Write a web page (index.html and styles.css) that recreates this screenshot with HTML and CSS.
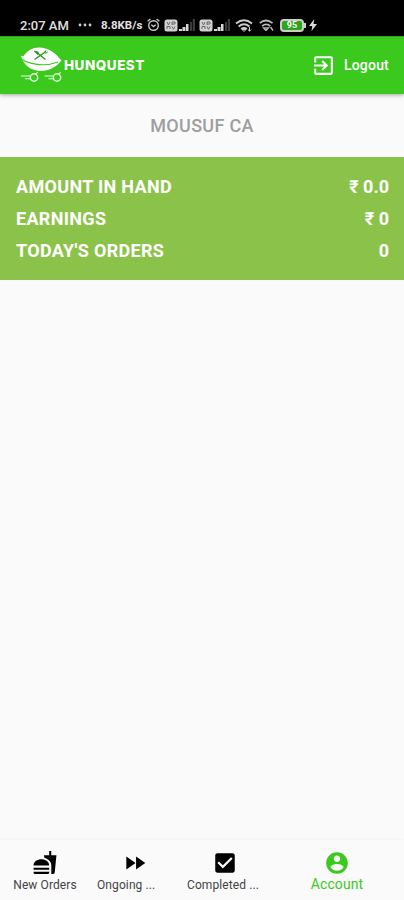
FILE: index.html
```
<!DOCTYPE html>
<html lang="en">

<head>
    <meta charset="utf-8">
    <meta name="viewport" content="width=device-width, initial-scale=1">
    <title>Hunquest</title>
    <link rel="stylesheet" href="styles.css">
</head>

<body>

    <svg width="0" height="0" class="defs">
        <symbol id="sim" viewBox="0 0 14 13">
            <rect x="0.5" y="0.5" width="13" height="12" rx="2.5" fill="#d2d2d2"/>
            <path d="M3 3l1.5 3L6 3M8 6V3h3v2H8M3 10V7.5h3V10M8 7.5l1.5 2.8L11 7.5" fill="none" stroke="#666" stroke-width="1"/>
        </symbol>
        <symbol id="signal" viewBox="0 0 16 12">
            <path d="M0 12v-2h3v2zM3.5 12V8h3v4zM7 12V5h2.5v7z" fill="#d8d8d8"/>
            <path d="M11 12V3h2v9zM13.7 12V0H16v12z" fill="#3c3c3c"/>
        </symbol>
    </svg>

    <div class="status">
        <span class="time">2:07 AM</span>
        <svg class="dots" width="14" height="4" viewBox="0 0 14 4" fill="#ccc"><circle cx="2" cy="2" r="1.4"/><circle cx="7" cy="2" r="1.4"/><circle cx="12" cy="2" r="1.4"/></svg>
        <span class="speed">8.8KB/s</span>
        <svg class="alarm" width="13" height="14" viewBox="0 0 13 14" fill="none" stroke="#c8c8c8" stroke-width="1.4"><circle cx="6.5" cy="7.5" r="4.8"/><path d="M.6 3.2L3.4 1M12.4 3.2L9.6 1M4.3 6.7l2.2 1.8 2.2-1.8"/></svg>
        <svg class="sim" width="14" height="13"><use href="#sim"/></svg>
        <svg class="signal" width="16" height="12"><use href="#signal"/></svg>
        <svg class="sim" width="14" height="13"><use href="#sim"/></svg>
        <svg class="signal" width="16" height="12"><use href="#signal"/></svg>
        <svg class="wifi" width="18" height="13" viewBox="0 0 18 13" fill="none" stroke="#ccc" stroke-width="1.9"><path d="M1 4.5q8-6.5 16 0M3.6 7.4q5.4-4.4 10.8 0M6.2 10q2.8-2.2 5.6 0"/><path d="M9 12.5l-2-2h4zM14.5 8v4M12.8 10.5l1.7 1.7 1.7-1.7" stroke-width="1"/></svg>
        <svg class="wifi2" width="15" height="12" viewBox="0 0 15 12" fill="none" stroke="#bbb" stroke-width="1.7"><path d="M.7 4.2q6.3-5.4 12.8 0M3.2 7q4-3.4 8 0" /><path d="M7 11.5L4.5 8.8h5zM11.5 8l2.5 3.5" stroke-width="1.3"/></svg>
        <div class="battery"><span>95</span></div>
        <i class="tip"></i>
        <svg class="bolt" width="8" height="12" viewBox="0 0 8 12" fill="#ddd"><path d="M5.3 0L0 7h3.3L2.5 12 8 5H4.5z"/></svg>
    </div>

    <header class="header">
        <div class="brand">
            <svg width="43" height="38" viewBox="0 0 43 38">
                <path d="M0 8.8l2.2.8C6 3.5 12 .5 18 .5c9 0 16 5 22.5 13C35 20 28 24 20 24 12 24 5 20 1.5 13z" fill="#fff"/>
                <path d="M1.2 12.6C10 18.5 26 19.3 37 15" fill="none" stroke="#3bc91e" stroke-width="1.2"/>
                <path d="M15 5l9.5 7.5M13.5 12.5L25 4.5" stroke="#249b18" stroke-width="1.4"/>
                <path d="M13.3 4.2l4 .8-.5 2.4zM23.2 5.8l2-2.7M24.3 6.7l2.6-2" fill="#249b18" stroke="#249b18" stroke-width=".9"/>
                <g fill="none" stroke="#e4ffe0" stroke-width="1.4">
                    <circle cx="13" cy="30.5" r="3.7"/>
                    <circle cx="36" cy="30.5" r="3.7"/>
                    <path d="M0 29h9.3M4 31.8h5.6M23.5 29h9M27.5 31.8h5.3M14.5 27.2l2.2-1.8M37.5 27.2l2.2-1.8" stroke-width="1.1"/>
                </g>
            </svg>
            <span class="name">HUNQUEST</span>
        </div>
        <div class="logout">
            <svg width="25" height="25" viewBox="0 0 24 24" fill="#fff"><path d="M10.09 15.59L11.5 17l5-5-5-5-1.41 1.41L12.67 11H3v2h9.67l-2.58 2.59zM19 3H5c-1.11 0-2 .9-2 2v4h2V5h14v14H5v-4H3v4c0 1.1.89 2 2 2h14c1.1 0 2-.9 2-2V5c0-1.1-.9-2-2-2z"/></svg>
            <span>Logout</span>
        </div>
    </header>

    <h1>MOUSUF CA</h1>

    <div class="summary">
        <div class="row"><span class="label">AMOUNT IN HAND</span><span>₹ 0.0</span></div>
        <div class="row"><span class="label">EARNINGS</span><span>₹ 0</span></div>
        <div class="row"><span class="label">TODAY'S ORDERS</span><span>0</span></div>
    </div>

    <nav class="tabs">
        <div class="tab">
            <svg width="26" height="26" viewBox="-.5 0 25 25"><path d="M18.06 22.99h1.66c.84 0 1.53-.64 1.63-1.46L23 5.05h-5V1h-1.97v4.05h-4.97l.3 2.34c1.71.47 3.31 1.32 4.27 2.26 1.44 1.42 2.43 2.89 2.43 5.29v8.05zM1 21.99V21h15.03v.99c0 .55-.45 1-1.01 1H2.01c-.56 0-1.01-.45-1.01-1zm15.03-7c0-8-15.03-8-15.03 0h15.03zM1.02 17h15v2h-15z"/></svg>
            <span>New Orders</span>
        </div>
        <div class="tab cut">
            <svg width="26" height="26" viewBox="0 0 24 24"><path d="M4 18l8.5-6L4 6v12zm9-12v12l8.5-6L13 6z"/></svg>
            <span>Ongoing ...</span>
        </div>
        <div class="tab cut">
            <svg width="26" height="26" viewBox="0 0 24 24"><path d="M19 3H5c-1.11 0-2 .9-2 2v14c0 1.1.89 2 2 2h14c1.11 0 2-.9 2-2V5c0-1.1-.89-2-2-2zm-9 14l-5-5 1.41-1.41L10 14.17l7.59-7.59L19 8l-9 9z"/></svg>
            <span>Completed ...</span>
        </div>
        <div class="tab active">
            <svg width="26" height="26" viewBox="0 0 24 24"><path d="M12 2C6.48 2 2 6.48 2 12s4.48 10 10 10 10-4.48 10-10S17.52 2 12 2zm0 3c1.66 0 3 1.34 3 3s-1.34 3-3 3-3-1.34-3-3 1.34-3 3-3zm0 14.2c-2.5 0-4.71-1.28-6-3.22.03-1.99 4-3.08 6-3.08 1.99 0 5.97 1.09 6 3.08-1.29 1.94-3.5 3.22-6 3.22z"/></svg>
            <span>Account</span>
        </div>
    </nav>

</body>

</html>
```

FILE: styles.css
```
body{
    margin: 0;
    height: 900px;
    display: flex;
    flex-direction: column;
    font-family: Roboto, "Liberation Sans", sans-serif;
    background-color: #fafafa;
    overflow: hidden;
}
svg{
    flex: none;
    display: block;
}
.defs{
    position: absolute;
}

.status{
    box-sizing: border-box;
    height: 36px;
    padding: 14px 0 0 20px;
    display: flex;
    align-items: center;
    background-color: #000;
    color: #e0e0e0;
    white-space: nowrap;
}
.time{
    width: 58px;
    font-size: 13px;
    font-weight: 500;
}
.speed{
    width: 46px;
    margin-left: 9px;
    font-size: 11.5px;
    font-weight: 700;
}
.sim{
    margin-left: 4px;
}
.signal{
    margin-left: 1px;
}
.wifi{
    margin-left: 5px;
}
.wifi2{
    margin-left: 6px;
}
.battery{
    box-sizing: border-box;
    width: 24px;
    height: 13px;
    margin-left: 6px;
    border: 2px solid #ccc;
    border-radius: 4px;
    background-color: #2ca51b;
    color: #fff;
    font-size: 9px;
    font-weight: 700;
    line-height: 9px;
    text-align: center;
}
.tip{
    width: 2px;
    height: 5px;
    background-color: #ccc;
}
.bolt{
    margin-left: 3px;
}

.header{
    box-sizing: border-box;
    height: 58px;
    padding: 0 15px 0 21px;
    display: flex;
    justify-content: space-between;
    align-items: center;
    background-color: #3bc91e;
    border-top: 1px solid #339f20;
    color: #fff;
    box-shadow: 0 1px 4px rgba(0,0,0,.35);
}
.brand{
    display: flex;
    align-items: center;
}
.name{
    margin-top: -2px;
    font-family: Inter, "Liberation Sans", sans-serif;
    font-size: 13.5px;
    font-weight: 800;
    letter-spacing: .5px;
}
.logout{
    display: flex;
    align-items: center;
    gap: 8px;
    margin-top: -1px;
    font-size: 14px;
    font-weight: 500;
    letter-spacing: .2px;
}

h1{
    margin: 0;
    height: 63px;
    font-size: 18px;
    font-weight: 500;
    line-height: 63px;
    letter-spacing: .3px;
    text-align: center;
    color: #9e9e9e;
}

.summary{
    box-sizing: border-box;
    height: 123px;
    padding: 14px 15px 0 16px;
    background-color: #8bc34a;
    color: #fff;
    font-size: 18px;
    font-weight: 700;
    line-height: 32px;
}
.row{
    display: flex;
    justify-content: space-between;
}
.label{
    letter-spacing: .32px;
}

.tabs{
    height: 60px;
    margin-top: auto;
    display: grid;
    grid-template-columns: 90px 90px 90px 1fr;
    background-color: #fafafa;
    box-shadow: 0 0 4px rgba(0,0,0,.05);
}
.tab{
    display: flex;
    flex-direction: column;
    align-items: center;
    padding-top: 10px;
    font-size: 12px;
    line-height: 19px;
    letter-spacing: .1px;
    color: #444;
    white-space: nowrap;
}
.tab svg{
    fill: #000;
}
.cut span{
    width: 76px;
}
.active{
    color: #3bc91e;
    font-size: 14px;
    line-height: 17px;
}
.active svg{
    fill: #3bc91e;
}
```
